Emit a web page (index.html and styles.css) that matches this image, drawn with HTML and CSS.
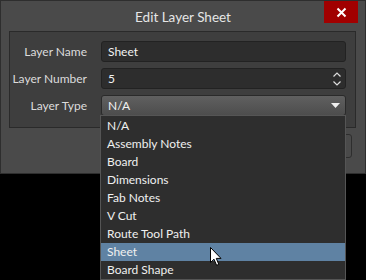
FILE: index.html
```html
<!DOCTYPE html>
<html lang="en">
<head>
    <meta charset="UTF-8">
    <title>Edit Layer Sheet</title>
    <link rel="stylesheet" href="styles.css">
</head>
<body>

<div class="window">
    <div class="titlebar">
        <span class="title">Edit Layer Sheet</span>
        <button class="close" type="button">
            <svg width="11" height="11" viewBox="0 0 11 11"><path d="M1.5 1.5 L9.5 9.5 M9.5 1.5 L1.5 9.5" stroke="#fff" stroke-width="2"/></svg>
        </button>
    </div>

    <div class="panel">
        <div class="row">
            <label>Layer Name</label>
            <div class="field">Sheet</div>
        </div>
        <div class="row">
            <label>Layer Number</label>
            <div class="field spin">
                <span>5</span>
                <span class="arrows">
                    <svg width="8" height="5" viewBox="0 0 8 5"><path d="M0.5 4.5 L4 1 L7.5 4.5" stroke="#ddd" stroke-width="1.2" fill="none"/></svg>
                    <svg width="8" height="5" viewBox="0 0 8 5"><path d="M0.5 0.5 L4 4 L7.5 0.5" stroke="#ddd" stroke-width="1.2" fill="none"/></svg>
                </span>
            </div>
        </div>
        <div class="row">
            <label>Layer Type</label>
            <div class="field select">
                <span>N/A</span>
                <svg width="9" height="5" viewBox="0 0 9 5"><path d="M0 0 H9 L4.5 5 Z" fill="#f0f0f0"/></svg>
            </div>
        </div>
    </div>

    <div class="buttons">
        <button class="btn" type="button">OK</button>
        <button class="btn" type="button">Cancel</button>
    </div>
</div>

<ul class="dropdown">
    <li>N/A</li>
    <li>Assembly Notes</li>
    <li>Board</li>
    <li>Dimensions</li>
    <li>Fab Notes</li>
    <li>V Cut</li>
    <li>Route Tool Path</li>
    <li class="active">Sheet</li>
    <li>Board Shape</li>
</ul>

<svg class="cursor" width="13" height="20" viewBox="0 0 13 20">
    <path d="M0.5 0.5 L0.5 15.5 L4 12.2 L6.6 18.3 L8.8 17.4 L6.3 11.4 L11 11.4 Z" fill="#fff" stroke="#000" stroke-width="1"/>
</svg>

</body>
</html>
```

FILE: styles.css
```css
html, body { height: 280px; }
body { position: relative; margin: 0; background: #000; font-family: "Lato", "Noto Sans", sans-serif; font-size: 12px; overflow: hidden; }

.window { width: 364px; height: 172px; background: #4a4a4a; border: 1px solid #2e2e2e; }

.titlebar { position: relative; height: 30px; display: flex; align-items: center; justify-content: center; }
.title { color: #e6e6e6; font-size: 13.5px; margin-top: 1px; }
.close { position: absolute; top: 0; right: 7px; width: 34px; height: 22px; background: #a10000; border: none; padding: 0; display: flex; align-items: center; justify-content: center; }

.panel { margin-left: 8px; width: 345px; height: 86px; padding-top: 9px; background: #3e3e3e; border: 1px solid #2a2a2a; display: flex; flex-direction: column; gap: 6px; }

.row { display: flex; align-items: center; height: 21px; }
.row label { width: 77px; text-align: right; color: #dcdcdc; margin-right: 14px; white-space: nowrap; }

.field { width: 237px; height: 19px; padding-left: 6px; background: #2d2d2d; border: 1px solid #222; border-radius: 3px; color: #f2f2f2; display: flex; align-items: center; }
.spin, .select { justify-content: space-between; }
.arrows { display: flex; flex-direction: column; gap: 4px; margin-right: 4px; }
.select { background: linear-gradient(#606060, #4d4d4d); border-color: #2a2a2a; }
.select svg { margin-right: 5px; }

.buttons { display: flex; justify-content: flex-end; gap: 8px; margin-top: 6px; margin-right: 13px; }
.btn { width: 75px; height: 24px; background: #4a4a4a; border: 1px solid #2e2e2e; border-radius: 3px; color: #ddd; font: inherit; }

.dropdown { position: absolute; left: 100px; top: 115px; width: 244px; margin: 0; padding: 1px 0 0; list-style: none; background: #2e2e2e; border: 1px solid #555; }
.dropdown li { height: 18px; line-height: 18px; padding-left: 6px; color: #f0f0f0; }
.dropdown li.active { background: #5f82a3; }

.cursor { position: absolute; left: 210px; top: 247px; }
```
